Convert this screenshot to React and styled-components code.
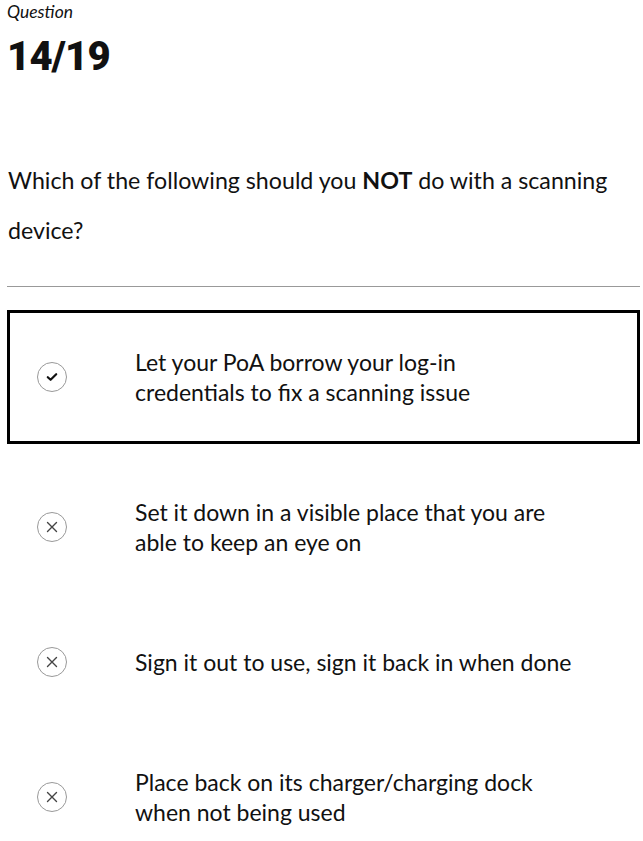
import React from 'react';
import styled, { createGlobalStyle } from 'styled-components';

const GlobalStyle = createGlobalStyle`
  body {
    margin: 0;
    background: #fff;
    color: #111;
    font-family: Lato, 'Open Sans', sans-serif;
  }
`;

const options = [
  { text: ['Let your PoA borrow your log-in', 'credentials to fix a scanning issue'], correct: true },
  { text: ['Set it down in a visible place that you are', 'able to keep an eye on'] },
  { text: ['Sign it out to use, sign it back in when done'] },
  { text: ['Place back on its charger/charging dock', 'when not being used'] },
];

const Check = () => (
  <svg width='14' height='14' viewBox='0 0 14 14'>
    <path d='M2.8 7.2l2.8 2.6L11.2 4.2' fill='none' stroke='#111' strokeWidth='2.2' strokeLinecap='round' strokeLinejoin='round' />
  </svg>
);

const Cross = () => (
  <svg width='14' height='14' viewBox='0 0 14 14'>
    <path d='M2.5 2.5l9 9M11.5 2.5l-9 9' fill='none' stroke='#444' strokeWidth='1.4' strokeLinecap='round' />
  </svg>
);

const App = () => {
  return (
    <>
      <GlobalStyle />
      <Page>
        <Label>Question</Label>
        <Counter>14/19</Counter>
        <Prompt>
          <Line>
            Which of the following should you <strong>NOT</strong> do with a scanning
          </Line>
          <Line>device?</Line>
        </Prompt>
        <Divider />
        <List>
          {options.map((opt, i) => (
            <Option key={i} selected={opt.correct}>
              <Mark>{opt.correct ? <Check /> : <Cross />}</Mark>
              <Answer>
                {opt.text.map((line, j) => (
                  <Line key={j}>{line}</Line>
                ))}
              </Answer>
            </Option>
          ))}
        </List>
      </Page>
    </>
  );
};

const Page = styled.div`
  width: 633px;
  padding-left: 7px;
`;

const Label = styled.div`
  font-style: italic;
  font-size: 17.5px;
  line-height: 22px;
  padding-top: 1px;
`;

const Counter = styled.h1`
  margin: 12px 0 0;
  font-family: Roboto, sans-serif;
  font-weight: 900;
  font-size: 40px;
  line-height: 44px;
  letter-spacing: -0.8px;
`;

const Line = styled.span`
  display: block;
`;

const Prompt = styled.p`
  margin: 76px 0 0;
  padding-left: 1px;
  font-size: 23.2px;
  line-height: 50px;

  strong {
    font-weight: 700;
  }
`;

const Divider = styled.hr`
  margin: 31px 0 23px;
  border: 0;
  border-top: 1px solid #999;
`;

const List = styled.div`
  display: flex;
  flex-direction: column;
  gap: 16px;
`;

const Option = styled.div`
  display: flex;
  align-items: center;
  padding: 34px 0;
  border: 3px solid ${(p) => (p.selected ? '#000' : 'transparent')};
`;

const Mark = styled.div`
  width: 28px;
  height: 28px;
  margin: 0 68px 0 27px;
  flex-shrink: 0;
  display: flex;
  align-items: center;
  justify-content: center;
  border: 1px solid #999;
  border-radius: 50%;
`;

const Answer = styled.div`
  display: flex;
  flex-direction: column;
  font-size: 23px;
  line-height: 30px;
`;

export default App;
